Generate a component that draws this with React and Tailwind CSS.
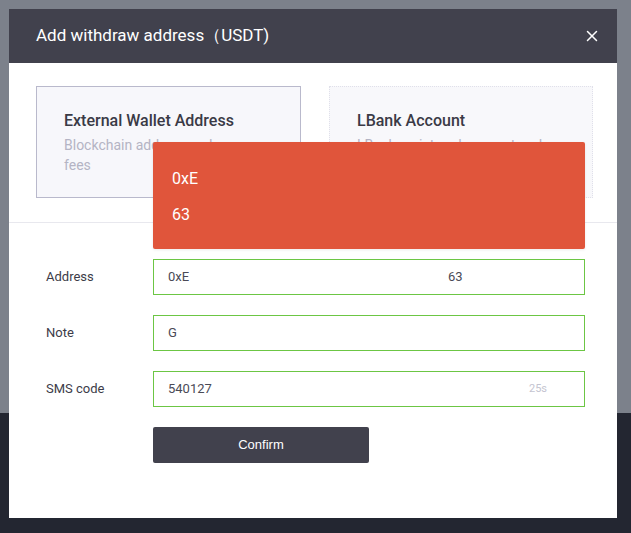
import { X } from 'lucide-react'

const font = { fontFamily: 'Roboto, "Noto Sans", sans-serif' }

function Field({ label, children }) {
  return (
    <div className="flex items-center">
      <div className="w-[144px] shrink-0 pl-[37px] text-[13px] text-[#3c3c48]">{label}</div>
      <div className="flex h-[36px] w-[432px] items-center border border-[#6cc644] pr-[37px] pl-[14px] text-[13px] text-[#4a4a56]">
        {children}
      </div>
    </div>
  )
}

export default function App() {
  return (
    <div className="relative h-[533px] w-[631px] overflow-hidden font-['Roboto',sans-serif]">
      {/* Page behind the backdrop */}
      <div className="flex h-full flex-col">
        <div className="h-[413px] bg-[#7c818b]" />
        <div className="flex-1 bg-[#232631]" />
      </div>

      {/* Modal */}
      <div className="absolute top-[9px] left-[9px] flex h-[509px] w-[608px] flex-col bg-white">
        <div className="flex h-[54px] items-center justify-between bg-[#41414d] pr-[16px] pl-[27px]">
          <h2 className="text-[17px] font-normal text-white">Add withdraw address（USDT)</h2>
          <X className="h-[18px] w-[18px] text-white" strokeWidth={2} />
        </div>

        <div className="flex gap-[28px] pt-[23px] pr-[24px] pb-[24px] pl-[27px]">
          <div className="h-[112px] w-[265px] border border-[#b9b9cc] bg-[#f7f7fb] pt-[22px] pl-[27px]">
            <div className="text-[16px] font-medium text-[#3a3a46]">External Wallet Address</div>
            <div className="mt-[2px] text-[14px] leading-[20px] text-[#b4b4c4]">
              Blockchain address and pay<br />fees
            </div>
          </div>
          <div className="h-[112px] w-[264px] border border-dotted border-[#e0e0ea] bg-[#f8f8fb] pt-[22px] pl-[27px]">
            <div className="text-[16px] font-medium text-[#3a3a46]">LBank Account</div>
            <div className="mt-[2px] text-[14px] leading-[20px] text-[#b4b4c4]">
              LBank registered account and
            </div>
          </div>
        </div>

        <div className="h-px bg-[#e8e8ee]" />

        <div className="flex flex-col gap-[20px] pt-[36px]">
          <Field label="Address">
            <span className="w-[280px]">0xE</span>
            <span>63</span>
          </Field>
          <Field label="Note">G</Field>
          <Field label="SMS code">
            <span className="flex-1">540127</span>
            <span className="text-[11px] text-[#c4c4d0]">25s</span>
          </Field>
          <div className="pl-[144px]">
            <button
              className="h-[36px] w-[216px] rounded-[2px] bg-[#41414d] text-[13px] text-white"
              style={{ fontFamily: '"Liberation Sans", Arial, sans-serif' }}
            >
              Confirm
            </button>
          </div>
        </div>
      </div>

      {/* Error tooltip over the cards */}
      <div
        className="absolute top-[142px] left-[153px] flex h-[107px] w-[432px] flex-col gap-[14px] rounded-[2px] bg-[#e0553b] pt-[26px] pl-[19px] text-[16px] leading-[22px] text-white shadow-[0_1px_3px_rgba(0,0,0,0.08)]"
        style={font}
      >
        <span>0xE</span>
        <span>63</span>
      </div>
    </div>
  )
}
